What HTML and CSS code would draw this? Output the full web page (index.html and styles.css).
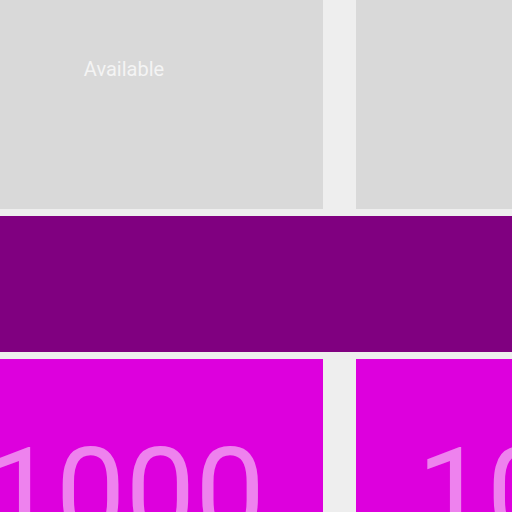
FILE: index.html
```html
<!DOCTYPE html>
<html>
<head>
<meta charset="utf-8">
<link rel="stylesheet" href="styles.css">
</head>
<body>
<div class="page">
  <div class="row row-top">
    <div class="tile tile-gray"><span class="label">Available</span></div>
    <div class="tile tile-gray"></div>
  </div>
  <div class="band"></div>
  <div class="row row-bottom">
    <div class="tile tile-magenta"><span class="big">1000</span></div>
    <div class="tile tile-magenta"><span class="big">1000</span></div>
  </div>
</div>
</body>
</html>
```
FILE: styles.css
```css
html, body {
  margin: 0;
  padding: 0;
  background: #eeeeee;
  overflow: hidden;
}
.page {
  width: 512px;
  height: 512px;
  overflow: hidden;
  display: flex;
  flex-direction: column;
  gap: 7px;
  font-family: Roboto, "Noto Sans", sans-serif;
}
.row {
  display: flex;
  gap: 33px;
  margin-left: -75px;
}
.tile {
  flex: 0 0 398px;
  display: flex;
  justify-content: center;
  align-items: flex-start;
  box-sizing: border-box;
}
.row-top {
  height: 209px;
  flex: 0 0 209px;
}
.tile-gray {
  background: #d9d9d9;
  padding-top: 57px;
}
.label {
  font-size: 20px;
  color: #f4f4f4;
  line-height: normal;
}
.band {
  flex: 0 0 136px;
  background: #800080;
}
.row-bottom {
  flex: 1 0 auto;
}
.tile-magenta {
  background: #dd00dd;
  padding-top: 62px;
  padding-left: 3px;
  overflow: hidden;
}
.big {
  font-size: 124px;
  color: #ee82ee;
  line-height: normal;
  white-space: nowrap;
}
```
